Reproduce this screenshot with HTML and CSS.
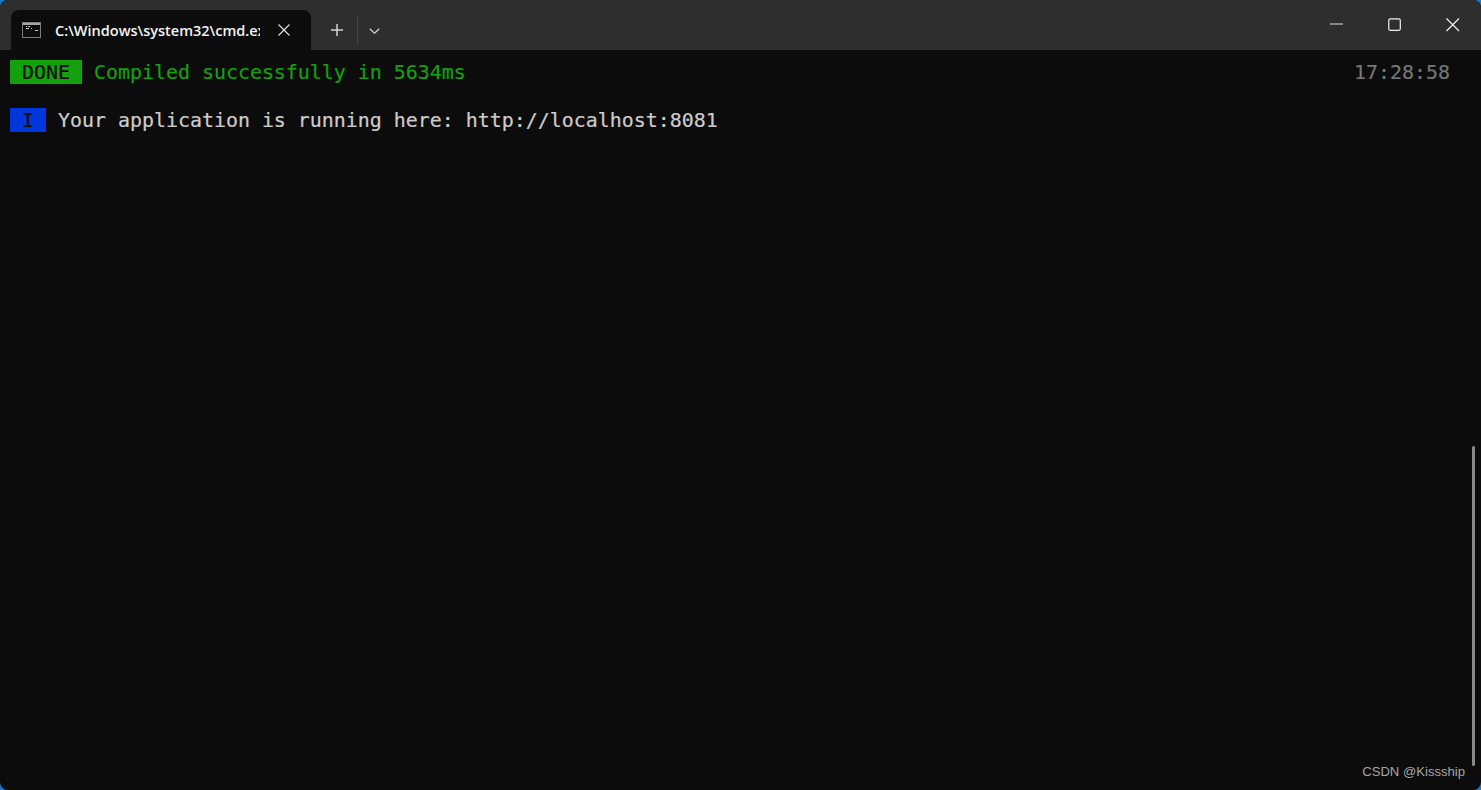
FILE: index.html
```html
<!DOCTYPE html>
<html lang="en">
<head>
<meta charset="utf-8">
<title>cmd</title>
<link rel="stylesheet" href="styles.css">
</head>
<body>
<div class="window">
  <header class="titlebar">
    <div class="tab">
      <svg class="tab-icon" width="19" height="16" viewBox="0 0 19 16">
        <rect x="0.5" y="0.5" width="18" height="15" fill="#0c0c0c" stroke="#7c7c7c"/>
        <rect x="1" y="1" width="17" height="2" fill="#a8a8a8"/>
        <path d="M4 4.5h1M6 4.5h2M4 6.5h3M9 6.5h1M13 8.5h3" stroke="#c8c8c8" stroke-width="1" fill="none"/>
      </svg>
      <div class="tab-title">C:\Windows\system32\cmd.exe</div>
      <svg class="tab-close" width="12" height="12" viewBox="0 0 12 12">
        <path d="M0.5 0.5L11.5 11.5M11.5 0.5L0.5 11.5" stroke="#e6e6e6" stroke-width="1.1" fill="none"/>
      </svg>
    </div>
    <div class="tab-actions">
      <svg class="add" width="12" height="12" viewBox="0 0 12 12">
        <path d="M6 0V12M0 6H12" stroke="#d4d4d4" stroke-width="1.5" fill="none"/>
      </svg>
      <span class="divider"></span>
      <svg class="chevron" width="11" height="6" viewBox="0 0 11 6">
        <path d="M0.7 0.7L5.5 5.2L10.3 0.7" stroke="#d6d6d6" stroke-width="1.2" fill="none"/>
      </svg>
    </div>
    <div class="controls">
      <svg width="14" height="14" viewBox="0 0 14 14"><path d="M0 6H13" stroke="#e0e0e0" stroke-width="1.2" fill="none"/></svg>
      <svg width="14" height="14" viewBox="0 0 14 14"><rect x="0.8" y="0.8" width="11.5" height="11.5" rx="1.5" stroke="#f0f0f0" stroke-width="1.2" fill="none"/></svg>
      <svg width="14" height="14" viewBox="0 0 14 14"><path d="M0.5 0.5L13 13M13 0.5L0.5 13" stroke="#f0f0f0" stroke-width="1.2" fill="none"/></svg>
    </div>
  </header>
  <main class="terminal">
    <div class="line">
      <span class="badge badge-done">&nbsp;DONE&nbsp;</span>
      <span class="success">&nbsp;Compiled successfully in 5634ms</span>
      <span class="clock">17:28:58</span>
    </div>
    <div class="line"></div>
    <div class="line">
      <span class="badge badge-info">&nbsp;I&nbsp;</span>
      <span class="plain">&nbsp;Your application is running here: http://localhost:8081</span>
    </div>
  </main>
  <div class="scrollbar"></div>
  <div class="watermark">CSDN @Kissship</div>
</div>
</body>
</html>
```
FILE: styles.css
```css
* { box-sizing: border-box; }
html, body {
  margin: 0;
  height: 100%;
  overflow: hidden;
  background: #1b78c8;
}
.window {
  position: relative;
  width: 1481px;
  height: 790px;
  display: flex;
  flex-direction: column;
  background: #0c0c0c;
  border-radius: 8px;
  overflow: hidden;
}
.titlebar {
  height: 50px;
  flex: none;
  display: flex;
  align-items: flex-end;
  padding-left: 11px;
  background: #2e2e2e;
}
.tab {
  width: 300px;
  height: 40px;
  display: flex;
  align-items: center;
  padding-left: 11px;
  background: #0c0c0c;
  border-radius: 8px 8px 0 0;
}
.tab-icon { flex: none; }
.tab-title {
  width: 205px;
  margin-left: 14px;
  padding-top: 1px;
  overflow: hidden;
  white-space: nowrap;
  font: 600 14.5px/20px "Open Sans", "Noto Sans", sans-serif;
  color: #f2f2f2;
}
.tab-close { flex: none; margin-left: 18px; }
.tab-actions {
  height: 40px;
  display: flex;
  align-items: center;
  padding-left: 20px;
}
.divider {
  width: 1px;
  height: 30px;
  margin-left: 14px;
  background: #464646;
}
.chevron { margin-left: 11px; margin-top: 1px; }
.controls {
  display: flex;
  align-self: flex-start;
  gap: 44px;
  margin-left: auto;
  padding: 18px 21px 0 0;
}
.terminal {
  flex: 1;
  padding: 10px 31px 0 10px;
  font-family: "DejaVu Sans Mono", "Liberation Mono", monospace;
  font-size: 19.93px;
  color: #cccccc;
  -webkit-text-stroke: 0.2px currentColor;
}
.line {
  display: flex;
  height: 24px;
  line-height: 26px;
  white-space: nowrap;
}
.badge {
  height: 24px;
  color: #0c0c0c;
}
.badge-done { background: #13a10e; }
.badge-info { background: #0037da; }
.success { color: #13a10e; }
.plain { color: #cccccc; }
.clock {
  margin-left: auto;
  color: #767676;
}
.scrollbar {
  position: absolute;
  left: 1472px;
  top: 446px;
  width: 3px;
  height: 320px;
  border-radius: 2px;
  background: #8a8a8a;
}
.watermark {
  position: absolute;
  right: 16px;
  bottom: 10px;
  font: 13.1px/16px "Liberation Sans", Arial, sans-serif;
  color: #a6a6a6;
}
```
